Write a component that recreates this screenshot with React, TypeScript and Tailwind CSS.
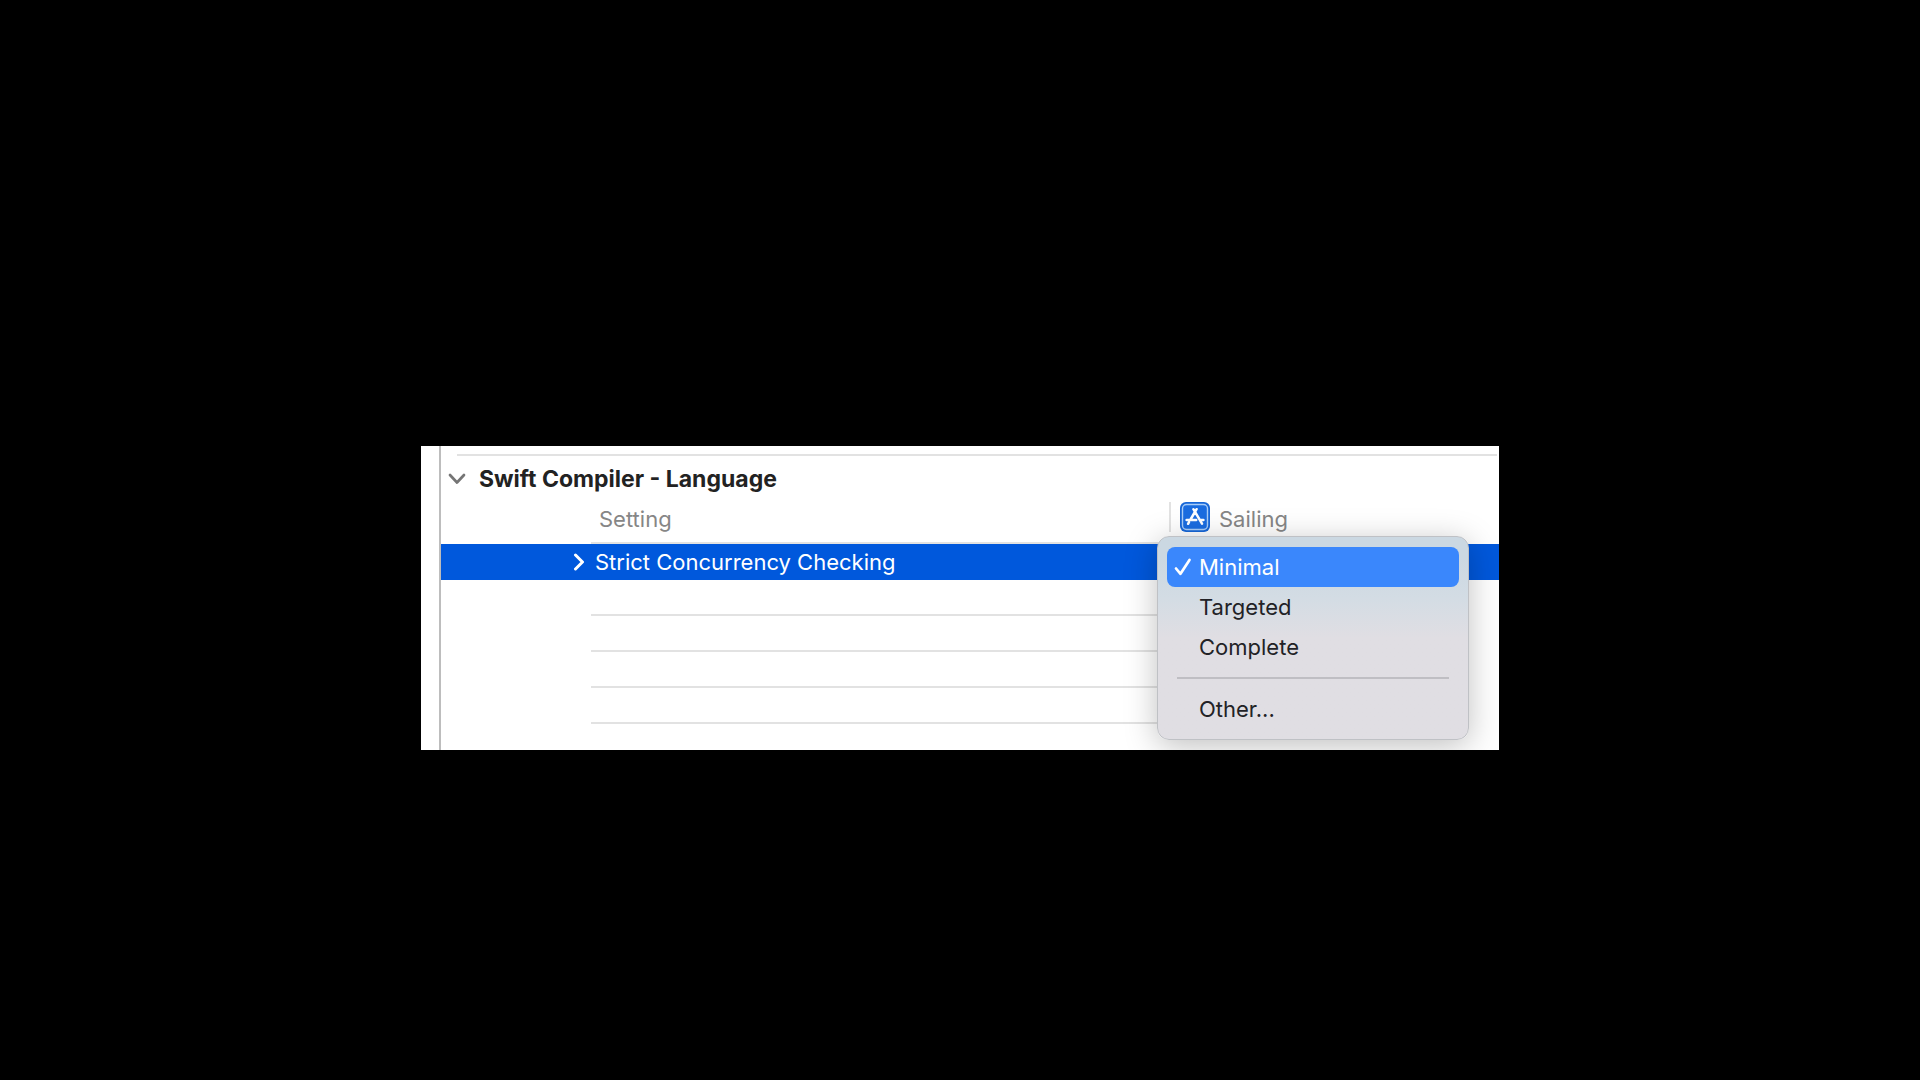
import type { ReactNode } from "react";

const emptyRows = [1, 2, 3, 4];

function Chevron({ down = false }: { down?: boolean }) {
  return down ? (
    <svg width="18" height="12" viewBox="0 0 18 12" fill="none" stroke="#757575" strokeWidth="2.7" strokeLinecap="round" strokeLinejoin="round" aria-hidden="true">
      <path d="M2 2l7 7.5L16 2" />
    </svg>
  ) : (
    <svg width="12" height="18" viewBox="0 0 12 18" fill="none" stroke="#fff" strokeWidth="3" strokeLinecap="round" strokeLinejoin="round" aria-hidden="true">
      <path d="M2.5 2l7 7-7 7" />
    </svg>
  );
}

function AppIcon() {
  return (
    <svg width="30" height="30" viewBox="0 0 30 30" fill="none" aria-hidden="true">
      <rect width="30" height="30" rx="6" fill="#1767d8" />
      <rect x="2.5" y="2.5" width="25" height="25" rx="4" fill="#1a6ce0" stroke="#a9cdf8" strokeWidth="1.4" />
      <g stroke="#fff" strokeWidth="2.5" strokeLinecap="round">
        <path d="M16.6 7.2l-5.8 9.8M13.4 7.2l8.6 14.4M6.6 18h9.6M20.4 18h3M9 20.2l-.9 1.6" />
      </g>
    </svg>
  );
}

function MenuItem({ children, checked = false }: { children: ReactNode; checked?: boolean }) {
  return (
    <button
      type="button"
      role="menuitemradio"
      aria-checked={checked}
      className={
        checked
          ? "flex h-10 w-full items-center rounded-lg bg-[#3a87fc] text-left text-white"
          : "flex h-10 w-full items-center rounded-lg text-left text-[#222226]"
      }
    >
      <span className="flex w-8 justify-center">
        {checked && (
          <svg width="18" height="18" viewBox="0 0 18 18" fill="none" stroke="#fff" strokeWidth="2.7" strokeLinecap="round" strokeLinejoin="round" aria-hidden="true">
            <path d="M2 10.5l4.5 5.3L15.5 2" />
          </svg>
        )}
      </span>
      {children}
    </button>
  );
}

function ValueMenu() {
  return (
    <div
      role="menu"
      aria-label="Strict Concurrency Checking"
      className="absolute -top-2 -left-3 z-10 w-[312px] rounded-xl border border-[#bfc1c5] bg-linear-to-b from-[#cbd8e2] from-10% via-[#d3dce4] via-30% to-[#e0dee3] to-50% px-[9px] py-[10px] shadow-[0_6px_32px_rgba(0,0,0,0.25)]"
    >
      <MenuItem checked>Minimal</MenuItem>
      <MenuItem>Targeted</MenuItem>
      <MenuItem>Complete</MenuItem>
      <hr className="mx-[10px] mt-[10px] mb-[10px] border-t-2 border-[#bfbec3]" />
      <MenuItem>Other...</MenuItem>
    </div>
  );
}

export default function App() {
  return (
    <div className="flex min-h-screen items-start justify-center bg-black pt-[446px] font-['Inter',sans-serif] text-[22px] leading-7">
      <main className="flex w-full max-w-[1078px] overflow-hidden bg-white pl-[18px]">
        <section className="min-w-0 flex-1 border-l-2 border-[#bdbdbd] pt-2 pb-[26px]">
          <hr className="mr-[2px] ml-4 border-t-2 border-[#e2e2e2]" />
          <h1 className="flex h-[46px] items-center text-[23px] font-bold text-[#222]">
            <button type="button" aria-expanded="true" className="flex items-center gap-[13px] pl-[7px]">
              <Chevron down />
              Swift Compiler - Language
            </button>
          </h1>
          <table className="w-full table-fixed border-separate border-spacing-0">
            <colgroup>
              <col className="w-[150px]" />
              <col className="w-[578px]" />
              <col />
            </colgroup>
            <thead>
              <tr className="h-[42px] text-left text-[#868686]">
                <td className="p-0" />
                <th scope="col" className="border-b-2 border-[#e2e2e2] p-0 pl-2 align-top font-normal">
                  <div className="pt-[3px]">Setting</div>
                </th>
                <th scope="col" className="p-0 align-top font-normal">
                  <div className="flex h-[30px] items-center gap-[9px] border-l-2 border-[#e2e2e2] pl-[9px]">
                    <AppIcon />
                    <span className="pt-1">Sailing</span>
                  </div>
                </th>
              </tr>
            </thead>
            <tbody>
              <tr className="h-9 bg-[#0058dc] text-white">
                <td className="p-0">
                  <button type="button" aria-label="Expand setting" className="ml-auto flex w-[18px] items-center">
                    <Chevron />
                  </button>
                </td>
                <td className="p-0 pl-1">Strict Concurrency Checking</td>
                <td className="relative p-0">
                  <ValueMenu />
                </td>
              </tr>
              {emptyRows.map((row) => (
                <tr key={row} className="h-9">
                  <td className="p-0" />
                  <td className="border-b-2 border-[#e2e2e2] p-0" />
                  <td className="p-0" />
                </tr>
              ))}
            </tbody>
          </table>
        </section>
      </main>
    </div>
  );
}
